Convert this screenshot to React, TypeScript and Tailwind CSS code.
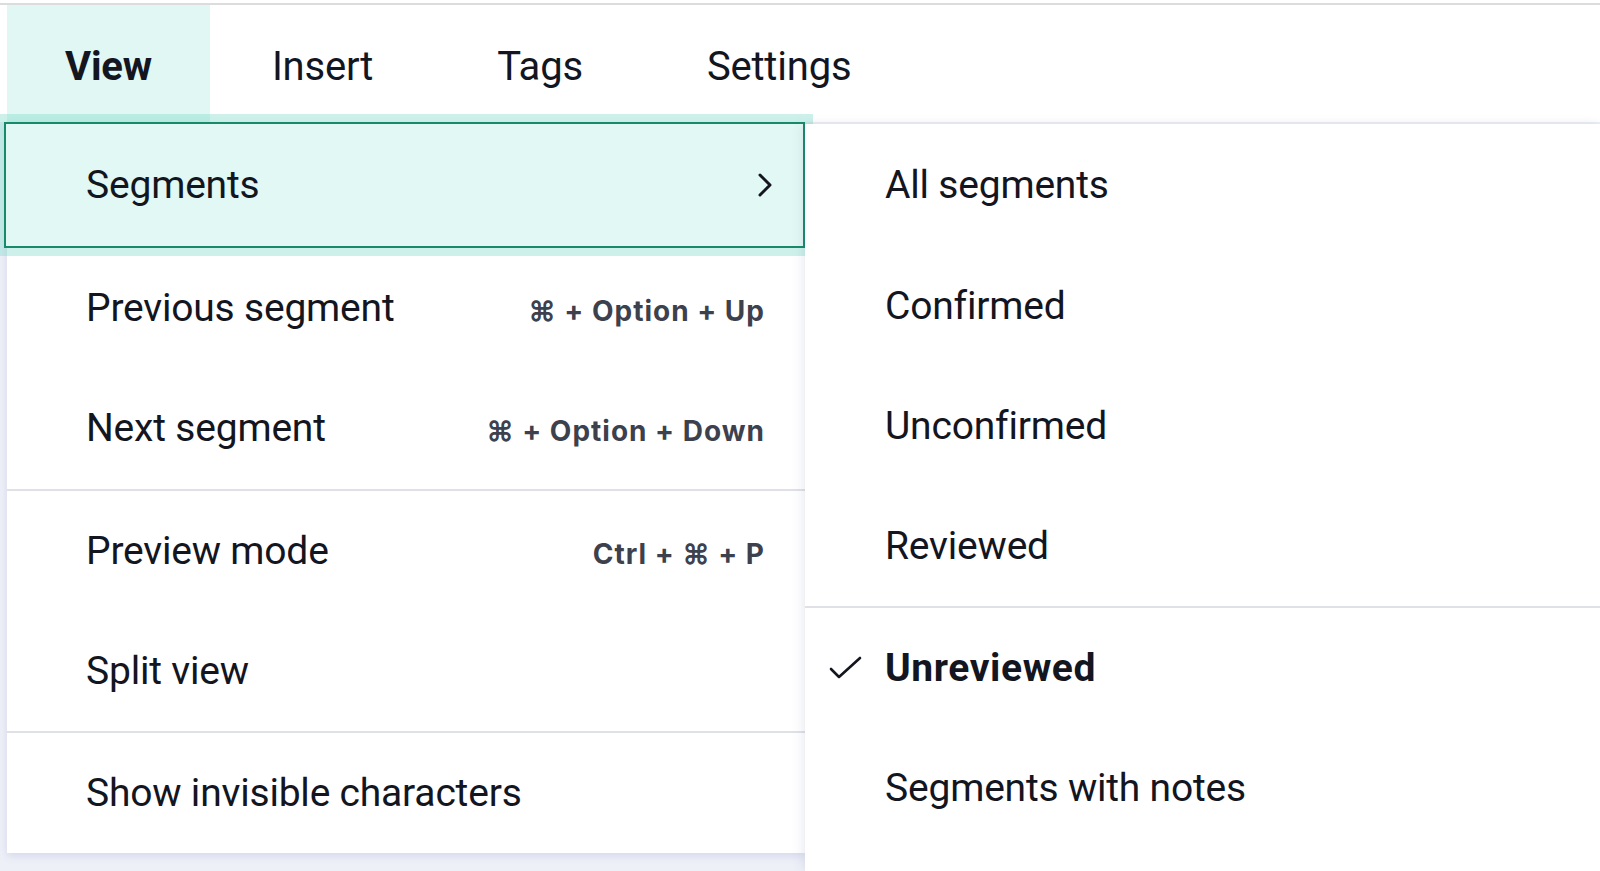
import React from 'react';

const tabs = ['View', 'Insert', 'Tags', 'Settings'];

type Item = { label: string; shortcut?: string };

const viewItems: Item[][] = [
  [
    { label: 'Previous segment', shortcut: '⌘ + Option + Up' },
    { label: 'Next segment', shortcut: '⌘ + Option + Down' },
  ],
  [
    { label: 'Preview mode', shortcut: 'Ctrl + ⌘ + P' },
    { label: 'Split view' },
  ],
  [{ label: 'Show invisible characters' }],
];

const filters = [
  ['All segments', 'Confirmed', 'Unconfirmed', 'Reviewed'],
  ['Unreviewed', 'Segments with notes'],
];

function Chevron() {
  return (
    <svg width="14" height="26" viewBox="0 0 14 26" fill="none" stroke="#14161f" strokeWidth="3" strokeLinecap="round" strokeLinejoin="round">
      <polyline points="2,3 12,13 2,23" />
    </svg>
  );
}

function Check() {
  return (
    <svg width="34" height="24" viewBox="0 0 34 24" fill="none" stroke="#14161f" strokeWidth="2.6" strokeLinecap="round" strokeLinejoin="round">
      <polyline points="2,13 10,21 31,2" />
    </svg>
  );
}

function ViewMenu() {
  return (
    <div className="ml-[7px] w-[798px] self-start bg-white shadow-[0_3px_8px_rgba(80,95,160,0.16)]">
      <div className="relative z-10 -ml-[3px] flex h-[126px] items-center justify-between border-2 border-[#178a6c] bg-[#e1f8f4] pl-[80px] pr-[31px] shadow-[0_0_0_8px_rgba(112,215,195,0.35)]">
        <span>Segments</span>
        <Chevron />
      </div>
      {viewItems.map((group, gi) => (
        <div key={gi} className={gi > 0 ? 'border-t-2 border-[#dfe1e7]' : ''}>
          {group.map((item, i) => (
            <div
              key={item.label}
              className={`flex items-center pl-[79px] pr-[40px] ${gi === 0 && i === 1 ? 'h-[121px]' : 'h-[120px]'}`}
            >
              <div className="flex w-full items-baseline justify-between">
                <span>{item.label}</span>
                {item.shortcut && (
                  <span className="font-['Inter',sans-serif] text-[28px] font-bold tracking-[1px] text-[#3d414d]">
                    {item.shortcut}
                  </span>
                )}
              </div>
            </div>
          ))}
        </div>
      ))}
    </div>
  );
}

function FilterMenu() {
  return (
    <div className="relative z-20 mt-[2px] flex-1 bg-white shadow-[-4px_0_10px_rgba(90,100,160,0.09),0_-2px_6px_rgba(0,0,0,0.03)]">
      {filters.map((group, gi) => (
        <div key={gi} className={gi > 0 ? 'border-t-2 border-[#dfe1e7]' : ''}>
          {group.map((label, i) => {
            const selected = label === 'Unreviewed';
            return (
              <div
                key={label}
                className={`flex items-center ${gi === 0 && i === 0 ? 'h-[122px]' : 'h-[120px]'}`}
              >
                <span className="flex w-[80px] pl-[24px]">{selected && <Check />}</span>
                <span className={selected ? 'font-bold tracking-[0.6px]' : ''}>{label}</span>
              </div>
            );
          })}
        </div>
      ))}
    </div>
  );
}

export default function App() {
  return (
    <div className="h-[871px] w-full overflow-hidden bg-white font-['Roboto',sans-serif] text-[39px] leading-none tracking-[-0.2px] text-[#13151f]">
      <div className="mt-[3px] h-[2px] bg-[#dcdcdc]" />
      <nav className="flex h-[117px] pl-[7px] text-[40px]">
        {tabs.map((tab, i) => (
          <div
            key={tab}
            className={`flex items-center pt-[6px] ${i === 0 ? 'bg-[#e0f7f3] px-[58px] font-bold' : 'px-[62px]'}`}
          >
            {tab}
          </div>
        ))}
      </nav>
      <div className="flex h-[749px] bg-[#eef0f8]">
        <ViewMenu />
        <FilterMenu />
      </div>
    </div>
  );
}
